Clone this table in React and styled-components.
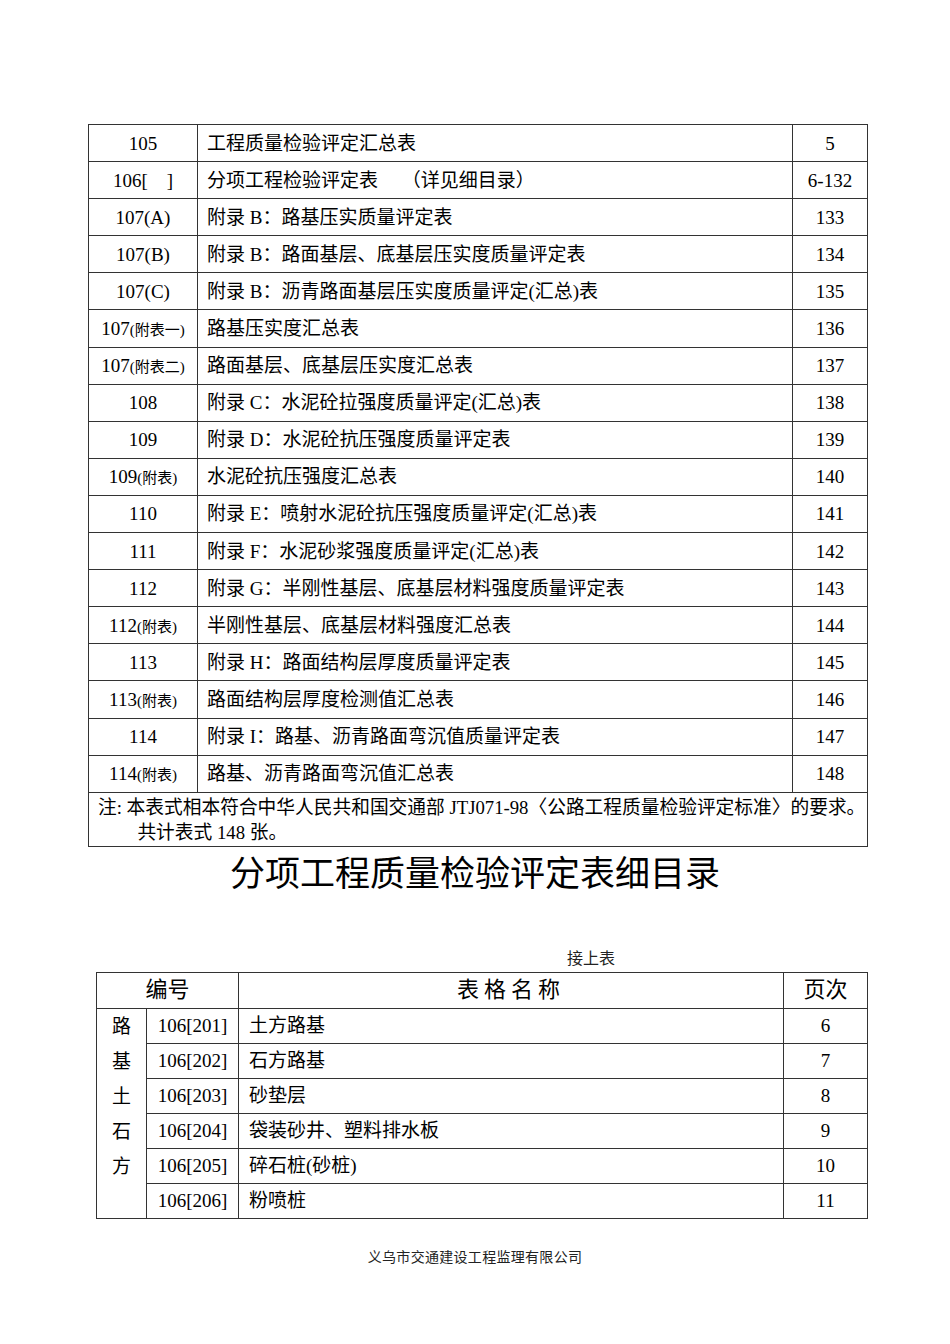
import React from 'react';
import styled, { createGlobalStyle } from 'styled-components';

const GlobalStyle = createGlobalStyle`
    body {
        margin: 0;
        background: #fff;
        color: #000;
        font-family: "Liberation Serif", "Noto Sans CJK SC", serif;
    }
`;

const Page = styled.div`
    width: 950px;
    min-height: 1344px;
    padding-top: 124px;
    box-sizing: border-box;
`;

const Table = styled.table`
    border-collapse: collapse;
    margin-left: ${p => p.$left}px;
    width: ${p => p.$width}px;
    table-layout: fixed;
    border: 1.5px solid #000;
    font-size: 19px;

    td {
        border: 1px solid #333;
        padding: 0;
        line-height: 1;
    }
`;

const Row = styled.tr`
    height: ${p => p.$h}px;
`;

const Code = styled.td`
    text-align: center;
    vertical-align: middle;
    white-space: nowrap;

    small {
        font-size: 15px;
    }
`;

const Name = styled.td`
    text-align: left;
    vertical-align: middle;
    && { padding-left: ${p => p.$pad}px; }
    white-space: nowrap;
`;

const Pages = styled.td`
    text-align: center;
    vertical-align: middle;
`;

const Note = styled.td`
    && { padding: 2px 0 1px 9px; }
    font-size: 19px;
    line-height: 25px !important;
    overflow: hidden;
`;

const NoteLine = styled.div`
    white-space: nowrap;
    transform: scaleX(0.985);
    transform-origin: left center;
    padding-left: ${p => p.$indent || 0}px;
`;

const Title = styled.h1`
    margin: 1px 0 0;
    text-align: center;
    font-family: "Noto Sans CJK SC", sans-serif;
    font-weight: 400;
    font-size: 35px;
    line-height: 46px;
    letter-spacing: 0;
`;

const Continued = styled.div`
    margin: 55px 0 3px 567px;
    font-size: 16px;
    line-height: 20px;
    color: #222;
`;

const Head = styled.td`
    text-align: center;
    vertical-align: middle;
    font-size: 22px;
    letter-spacing: ${p => p.$spacing || 0}px;
`;

const Vertical = styled.td`
    text-align: center;
    vertical-align: top;
    && { padding-top: 0; }

    span {
        display: block;
        height: 35px;
        line-height: 35px;
    }
`;

const Footer = styled.div`
    margin-top: 30px;
    text-align: center;
    font-size: 14px;
    line-height: 18px;
    letter-spacing: 0.3px;
    color: #222;
`;

const rows = [
    ['105', null, '工程质量检验评定汇总表', '5'],
    ['106[\u00a0\u00a0\u00a0 ]', null, '分项工程检验评定表\u3000 （详见细目录）', '6-132'],
    ['107(A)', null, '附录 B：路基压实质量评定表', '133'],
    ['107(B)', null, '附录 B：路面基层、底基层压实度质量评定表', '134'],
    ['107(C)', null, '附录 B：沥青路面基层压实度质量评定(汇总)表', '135'],
    ['107', '(附表一)', '路基压实度汇总表', '136'],
    ['107', '(附表二)', '路面基层、底基层压实度汇总表', '137'],
    ['108', null, '附录 C：水泥砼拉强度质量评定(汇总)表', '138'],
    ['109', null, '附录 D：水泥砼抗压强度质量评定表', '139'],
    ['109', '(附表)', '水泥砼抗压强度汇总表', '140'],
    ['110', null, '附录 E：喷射水泥砼抗压强度质量评定(汇总)表', '141'],
    ['111', null, '附录 F：水泥砂浆强度质量评定(汇总)表', '142'],
    ['112', null, '附录 G：半刚性基层、底基层材料强度质量评定表', '143'],
    ['112', '(附表)', '半刚性基层、底基层材料强度汇总表', '144'],
    ['113', null, '附录 H：路面结构层厚度质量评定表', '145'],
    ['113', '(附表)', '路面结构层厚度检测值汇总表', '146'],
    ['114', null, '附录 I：路基、沥青路面弯沉值质量评定表', '147'],
    ['114', '(附表)', '路基、沥青路面弯沉值汇总表', '148'],
];

const details = [
    ['106[201]', '土方路基', '6'],
    ['106[202]', '石方路基', '7'],
    ['106[203]', '砂垫层', '8'],
    ['106[204]', '袋装砂井、塑料排水板', '9'],
    ['106[205]', '碎石桩(砂桩)', '10'],
    ['106[206]', '粉喷桩', '11'],
];

export default function App() {
    return <Page>
        <GlobalStyle />
        <Table $left={88} $width={779}>
            <colgroup>
                <col style={{ width: 109 }} />
                <col style={{ width: 595 }} />
                <col style={{ width: 75 }} />
            </colgroup>
            <tbody>
                {rows.map(([code, sub, name, page], i) => <Row key={i} $h={37.1}>
                    <Code>{code}{sub && <small>{sub}</small>}</Code>
                    <Name $pad={9}>{name}</Name>
                    <Pages>{page}</Pages>
                </Row>)}
                <tr>
                    <Note colSpan={3}>
                        <NoteLine>注: 本表式相本符合中华人民共和国交通部 JTJ071-98〈公路工程质量检验评定标准〉的要求。</NoteLine>
                        <NoteLine $indent={40}>共计表式 148 张。</NoteLine>
                    </Note>
                </tr>
            </tbody>
        </Table>

        <Title>分项工程质量检验评定表细目录</Title>
        <Continued>接上表</Continued>

        <Table $left={96} $width={771}>
            <colgroup>
                <col style={{ width: 50 }} />
                <col style={{ width: 92 }} />
                <col style={{ width: 545 }} />
                <col style={{ width: 84 }} />
            </colgroup>
            <tbody>
                <Row $h={36}>
                    <Head colSpan={2}>编号</Head>
                    <Head $spacing={5}>表格名称</Head>
                    <Head>页次</Head>
                </Row>
                {details.map(([code, name, page], i) => <Row key={code} $h={35}>
                    {i === 0 && <Vertical rowSpan={6}>
                        {'路基土石方'.split('').map(c => <span key={c}>{c}</span>)}
                    </Vertical>}
                    <Code>{code}</Code>
                    <Name $pad={10}>{name}</Name>
                    <Pages>{page}</Pages>
                </Row>)}
            </tbody>
        </Table>

        <Footer>义乌市交通建设工程监理有限公司</Footer>
    </Page>;
}
